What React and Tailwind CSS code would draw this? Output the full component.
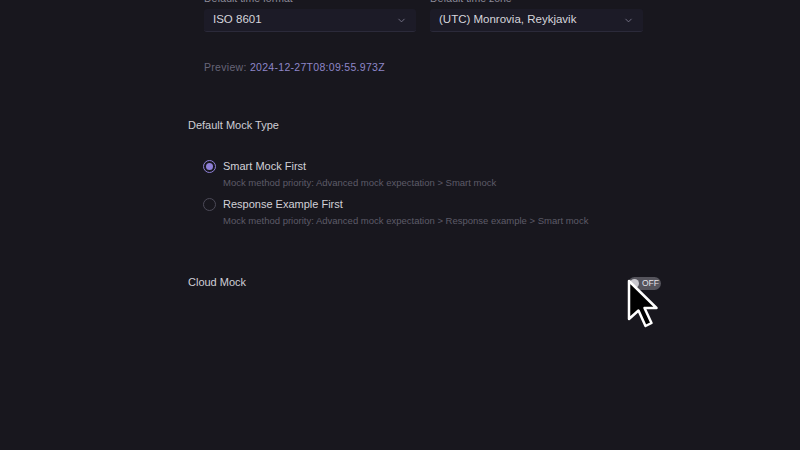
import { ChevronDown } from 'lucide-react';

function Select({ value, width }) {
  return (
    <div className={`flex h-[23px] items-center justify-between rounded-[3px] border-b border-[#2b2a3a] bg-[#1c1b27] pl-[9px] pr-[9px] ${width}`}>
      <span className="text-[11.5px] text-[#d6d5dc]">{value}</span>
      <ChevronDown size={11} strokeWidth={2} className="text-[#77758a]" />
    </div>
  );
}

function Radio({ checked, label, hint }) {
  return (
    <div className="flex flex-col">
      <div className="flex h-[13px] items-center gap-[7px]">
        {checked ? (
          <span className="flex h-[13px] w-[13px] items-center justify-center rounded-full border border-[#8f80d8]">
            <span className="h-[7px] w-[7px] rounded-full bg-[#8f80d8]" />
          </span>
        ) : (
          <span className="h-[13px] w-[13px] rounded-full border border-[#4c4a58]" />
        )}
        <span className="text-[11px] leading-[13px] text-[#d2d1d8]">{label}</span>
      </div>
      <div className="mt-[4px] pl-[20px] text-[9.5px] leading-[12px] text-[#5d5b68]">{hint}</div>
    </div>
  );
}

function Cursor() {
  return (
    <svg width="34" height="52" viewBox="0 0 34 52" className="absolute left-[626px] top-[278px]">
      <path
        d="M3 3 L3 41 L12.5 32.5 L19.5 48 L25.5 45 L18.5 30 L30.5 30 Z"
        fill="#000"
        stroke="#fff"
        strokeWidth="2.5"
        strokeLinejoin="round"
      />
    </svg>
  );
}

export default function App() {
  return (
    <div
      className="relative h-[450px] w-[800px] overflow-hidden bg-[#18171e]"
      style={{ fontFamily: '"Liberation Sans", Arial, sans-serif' }}
    >
      <div className="ml-[188px] w-[480px]">
        {/* Time settings */}
        <div className="-mt-[8px] flex gap-[14px] pl-[16px]">
          <div className="flex flex-col gap-[5px]">
            <span className="text-[10.5px] leading-[12px] text-[#8c8a98]">Default time format</span>
            <Select value="ISO 8601" width="w-[212px]" />
          </div>
          <div className="flex flex-col gap-[5px]">
            <span className="text-[10.5px] leading-[12px] text-[#8c8a98]">Default time zone</span>
            <Select value="(UTC) Monrovia, Reykjavik" width="w-[213px]" />
          </div>
        </div>

        <div className="mt-[29px] pl-[16px] text-[10.5px] leading-[12px] tracking-[0.3px]">
          <span className="text-[#676578]">Preview: </span>
          <span className="text-[#8e86c8]">2024-12-27T08:09:55.973Z</span>
        </div>

        {/* Default Mock Type */}
        <div className="mt-[46px] text-[11px] leading-[13px] text-[#cfced6]">Default Mock Type</div>
        <div className="mt-[28px] flex flex-col gap-[9px] pl-[15px]">
          <Radio
            checked
            label="Smart Mock First"
            hint="Mock method priority: Advanced mock expectation > Smart mock"
          />
          <Radio
            label="Response Example First"
            hint="Mock method priority: Advanced mock expectation > Response example > Smart mock"
          />
        </div>

        {/* Cloud Mock */}
        <div className="mt-[49px] flex h-[13px] items-center justify-between pr-[7px]">
          <span className="text-[11px] leading-[13px] text-[#cfced6]">Cloud Mock</span>
          <div className="mt-[2px] flex h-[13px] w-[33px] items-center gap-[3px] rounded-full bg-[#55545c] pl-[2px]">
            <span className="h-[9px] w-[9px] rounded-full bg-[#c9c8ce]" />
            <span className="text-[8.5px] leading-none text-[#e4e3e8]">OFF</span>
          </div>
        </div>
      </div>
      <Cursor />
    </div>
  );
}
